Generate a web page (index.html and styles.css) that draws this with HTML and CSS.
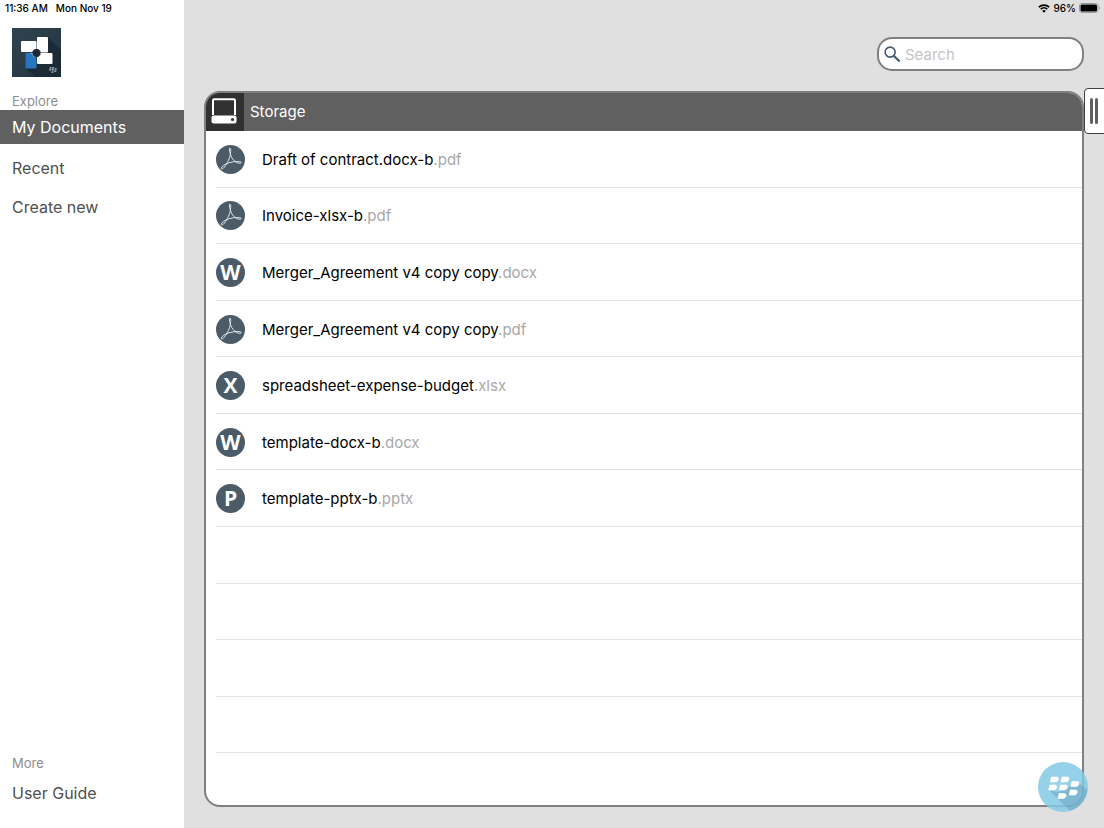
FILE: index.html
```html
<!DOCTYPE html>
<html lang="en">
<head>
    <meta charset="UTF-8">
    <meta name="viewport" content="width=device-width, initial-scale=1.0">
    <title>My Documents</title>
    <link rel="stylesheet" href="styles.css">
</head>
<body>

    <!-- shared icon shapes -->
    <svg class="sprite" aria-hidden="true">
        <symbol id="icon-pdf" viewBox="0 0 30 30">
            <circle cx="15" cy="15" r="15" fill="#4b5b67"/>
            <path d="M14.500 3.200C13.300 3.200 14 7 15 10C16 13.500 19 17.500 23 18.700C25.500 19.500 27 18.500 25.500 17.500C22 16.300 14 17.500 9.500 20C6 22 4.500 24.500 6 24.800C8 25 11.500 19 13.500 14.500C15.200 10.500 15.900 3.200 14.500 3.200Z" fill="none" stroke="#e4e8ea" stroke-width="1"/>
        </symbol>
        <symbol id="icon-bb" viewBox="0 0 32 24">
            <g fill="currentColor" stroke="currentColor" stroke-width=".7" stroke-linejoin="round">
                <path d="M3.500 1H8.300C10.500 1 10.800 2.300 10.400 3.500C10 5.200 8.800 6 7 6H2.400Z"/>
                <path d="M14 1H18.800C21 1 21.300 2.300 20.900 3.500C20.500 5.200 19.300 6 17.500 6H12.900Z"/>
                <path d="M1.800 9H6.600C8.800 9 9.100 10.300 8.700 11.500C8.300 13.200 7.100 14 5.300 14H.7Z"/>
                <path d="M12.300 9H17.100C19.300 9 19.600 10.300 19.200 11.500C18.800 13.200 17.600 14 15.800 14H11.200Z"/>
                <path d="M24 5.500H28.800C31 5.500 31.300 6.800 30.900 8C30.500 9.700 29.300 10.500 27.500 10.500H22.900Z"/>
                <path d="M22.300 14H27.100C29.300 14 29.600 15.300 29.200 16.500C28.800 18.200 27.600 19 25.800 19H21.200Z"/>
                <path d="M11 17.500H15.800C18 17.500 18.300 18.800 17.900 20C17.500 21.700 16.300 22.500 14.500 22.500H9.900Z"/>
            </g>
        </symbol>
    </svg>

    <aside class="sidebar">
        <div class="status status-left">
            <span>11:36 AM</span>
            <span>Mon Nov 19</span>
        </div>
        <svg class="app-logo" viewBox="0 0 49 49" role="img" aria-label="App logo">
            <defs>
                <linearGradient id="logoBg" x1="0" y1="0" x2="1" y2="1">
                    <stop offset="0" stop-color="#304450"/>
                    <stop offset="1" stop-color="#22333f"/>
                </linearGradient>
            </defs>
            <rect width="49" height="49" fill="url(#logoBg)"/>
            <path d="M36 9L49 22V49H24L13.500 40L30 24Z" fill="#1d2b36"/>
            <rect x="9" y="13" width="15.500" height="11" rx="1" fill="#fff"/>
            <rect x="25" y="9" width="11" height="15.500" rx="1" fill="#fff"/>
            <rect x="25" y="25" width="15.500" height="11" rx="1" fill="#fff"/>
            <rect x="13.500" y="25" width="11" height="15.500" rx="1" fill="#2676c0"/>
            <path d="M19 25H24.500V29H22Z" fill="#d9eaf8"/>
            <path d="M22.800 21H26.200L28.500 23.300V26.700L26.200 29H22.800L20.500 26.700V23.300Z" fill="#1d2a36"/>
            <use href="#icon-bb" x="37" y="39" width="8" height="6" color="#b4bfc7"/>
        </svg>

        <nav class="nav">
            <h2 class="nav-title">Explore</h2>
            <a class="nav-item active" href="#">My Documents</a>
            <a class="nav-item" href="#">Recent</a>
            <a class="nav-item" href="#">Create new</a>
        </nav>
        <nav class="nav nav-more">
            <h2 class="nav-title">More</h2>
            <a class="nav-item" href="#">User Guide</a>
        </nav>
    </aside>

    <main class="main">
        <div class="status status-right">
            <svg class="wifi" viewBox="0 0 12 9" aria-hidden="true">
                <g fill="none" stroke="#000" stroke-width="1.600">
                    <path d="M.8 3.200C3.800 .4 8.200 .4 11.200 3.200"/>
                    <path d="M2.700 5.200C4.600 3.400 7.400 3.400 9.300 5.200"/>
                </g>
                <path d="M4.100 6.800C5.200 5.800 6.800 5.800 7.900 6.800L6 8.700Z"/>
            </svg>
            <span>96%</span>
            <svg class="battery" viewBox="0 0 22 10" aria-hidden="true">
                <rect x=".5" y=".5" width="18.500" height="9" rx="2.500" fill="none" stroke="#999"/>
                <rect x="1.500" y="1.500" width="16.500" height="7" rx="1.500"/>
                <path d="M20.200 3.500C21.400 4 21.400 6 20.200 6.500Z" fill="#999"/>
            </svg>
        </div>

        <form class="search" role="search">
            <label for="search" aria-label="Search">
                <svg class="search-icon" viewBox="0 0 18 18">
                    <circle cx="6.500" cy="6.500" r="5.300" fill="none" stroke="#465867" stroke-width="1.700"/>
                    <path d="M10.300 10.300L16.500 16.500" stroke="#465867" stroke-width="2.300"/>
                </svg>
            </label>
            <input type="search" id="search" name="search" placeholder="Search">
        </form>

        <section class="panel">
            <header class="panel-header">
                <div class="storage-icon">
                    <svg viewBox="0 0 26 26" aria-hidden="true">
                        <path d="M2 17V2.500Q2 1.300 3.200 1.300H22.800Q24 1.300 24 2.500V17" fill="none" stroke="#fff" stroke-width="2"/>
                        <rect x=".5" y="17.500" width="25" height="8" rx="2" fill="#fff"/>
                        <circle cx="21.500" cy="21.500" r="1.600" fill="#303030"/>
                    </svg>
                </div>
                <h1>Storage</h1>
            </header>
            <ul class="files">
                <li class="file">
                    <svg class="file-icon"><use href="#icon-pdf"/></svg>
                    <span class="file-name">Draft of contract.docx-b<span class="ext">.pdf</span></span>
                </li>
                <li class="file">
                    <svg class="file-icon"><use href="#icon-pdf"/></svg>
                    <span class="file-name">Invoice-xlsx-b<span class="ext">.pdf</span></span>
                </li>
                <li class="file">
                    <span class="file-icon letter">W</span>
                    <span class="file-name">Merger_Agreement v4 copy copy<span class="ext">.docx</span></span>
                </li>
                <li class="file">
                    <svg class="file-icon"><use href="#icon-pdf"/></svg>
                    <span class="file-name">Merger_Agreement v4 copy copy<span class="ext">.pdf</span></span>
                </li>
                <li class="file">
                    <span class="file-icon letter">X</span>
                    <span class="file-name">spreadsheet-expense-budget<span class="ext">.xlsx</span></span>
                </li>
                <li class="file">
                    <span class="file-icon letter">W</span>
                    <span class="file-name">template-docx-b<span class="ext">.docx</span></span>
                </li>
                <li class="file">
                    <span class="file-icon letter">P</span>
                    <span class="file-name">template-pptx-b<span class="ext">.pptx</span></span>
                </li>
                <li class="file"></li>
                <li class="file"></li>
                <li class="file"></li>
                <li class="file"></li>
                <li class="file"></li>
            </ul>
        </section>
    </main>

    <button class="drawer-handle" type="button" aria-label="Open drawer">
        <span class="grip"></span>
        <span class="grip"></span>
    </button>
    <button class="launcher" type="button" aria-label="Open launcher">
        <svg viewBox="0 0 50 50">
            <path d="M11 28L32 49Q47 44 49.500 28L40 20L20 30Z" fill="#5f93ad" opacity=".4"/>
            <use href="#icon-bb" x="10" y="14" width="32" height="24"/>
        </svg>
    </button>

</body>
</html>
```
FILE: styles.css
```css
* {
    box-sizing: border-box;
}
body {
    font-family: Inter, "Liberation Sans", sans-serif;
    font-size: 16px;
    background-color: #e0e0e0;
    margin: 0;
    display: flex;
    height: 100vh;
    position: relative;
    overflow: hidden;
}
.sprite {
    position: absolute;
    width: 0;
    height: 0;
}
h1, h2, ul {
    margin: 0;
    padding: 0;
    font-weight: normal;
}

/* status bar */
.status {
    display: flex;
    align-items: center;
    height: 16px;
    font-size: 10px;
    font-weight: 500;
    color: #000;
}
.status-left {
    gap: 8px;
    padding-left: 5px;
}
.status-right {
    gap: 3px;
    justify-content: flex-end;
    padding-right: 3px;
}
.wifi {
    width: 12px;
    height: 9px;
}
.battery {
    width: 22px;
    height: 10px;
}

/* sidebar */
.sidebar {
    flex: 0 0 184px;
    background-color: #fff;
    display: flex;
    flex-direction: column;
    padding-bottom: 18px;
}
.app-logo {
    width: 49px;
    height: 49px;
    margin: 12px 0 16px 12px;
}
.nav {
    display: flex;
    flex-direction: column;
}
.nav-more {
    margin-top: auto;
}
.nav-title {
    padding-left: 12px;
    font-size: 13px;
    line-height: 17px;
    color: #8e8e8e;
}
.nav-item {
    padding-left: 12px;
    margin-bottom: 5px;
    font-size: 16px;
    line-height: 34px;
    color: #505050;
    text-decoration: none;
}
.nav-item.active {
    background-color: #606060;
    color: #fff;
    margin-bottom: 7px;
}
.nav-more .nav-item {
    margin: 4px 0 0;
}

/* main area */
.main {
    flex: 1;
    min-width: 0;
    display: flex;
    flex-direction: column;
    padding-bottom: 21px;
}
.search {
    align-self: flex-end;
    display: flex;
    align-items: center;
    gap: 4px;
    width: 207px;
    height: 34px;
    margin: 21px 20px 20px 0;
    padding: 0 12px 0 5px;
    background-color: #fff;
    border: 2px solid #808080;
    border-radius: 15px;
}
.search label {
    display: flex;
}
.search-icon {
    width: 17px;
    height: 17px;
}
.search input {
    flex: 1;
    min-width: 0;
    padding: 0;
    border: none;
    outline: none;
    background: none;
    font-family: inherit;
    font-size: 15px;
}
.search input::placeholder {
    color: #c4c4c8;
}
.panel {
    flex: 1;
    min-height: 0;
    display: flex;
    flex-direction: column;
    margin: 0 20px;
    background-color: #fff;
    border: 2px solid #808080;
    border-radius: 16px;
    overflow: hidden;
}
.panel-header {
    flex: 0 0 38px;
    display: flex;
    align-items: center;
    gap: 6px;
    background-color: #606060;
    color: #fff;
}
.panel-header h1 {
    padding-bottom: 2px;
    font-size: 15px;
}
.storage-icon {
    width: 38px;
    height: 38px;
    padding: 5px;
    background-color: #303030;
}
.storage-icon svg {
    display: block;
    width: 26px;
    height: 26px;
}
.files {
    flex: 1;
    display: flex;
    flex-direction: column;
    list-style: none;
    margin: 0 0 -5px 10px;
}
.file {
    flex: 1;
    display: flex;
    align-items: center;
    gap: 17px;
    padding-top: 1px;
    border-bottom: 1px solid #e2e2e2;
}
.file-icon {
    flex: none;
    width: 29px;
    height: 29px;
}
.letter {
    display: flex;
    align-items: center;
    justify-content: center;
    border-radius: 50%;
    background-color: #4b5b67;
    color: #fff;
    font-family: "Open Sans", sans-serif;
    font-size: 21px;
    font-weight: bold;
    line-height: 28px;
    padding-bottom: 1px;
}
.file-name {
    font-size: 15px;
    color: #000;
}
.ext {
    color: #a8a8a8;
}

/* floating controls */
button {
    cursor: pointer;
}
.drawer-handle {
    position: absolute;
    top: 88px;
    right: -4px;
    width: 24px;
    height: 46px;
    display: flex;
    align-items: center;
    gap: 2px;
    padding: 0 0 0 5px;
    background-color: #fff;
    border: 1px solid #404040;
    border-radius: 4px;
}
.grip {
    width: 3px;
    height: 26px;
    border-radius: 2px;
    background-color: #606060;
}
.launcher {
    position: absolute;
    right: 16px;
    bottom: 16px;
    width: 50px;
    height: 50px;
    padding: 0;
    border: none;
    border-radius: 50%;
    background-color: rgba(130, 201, 229, 0.85);
    color: #fff;
    overflow: hidden;
}
.launcher svg {
    display: block;
    width: 50px;
    height: 50px;
}
```
